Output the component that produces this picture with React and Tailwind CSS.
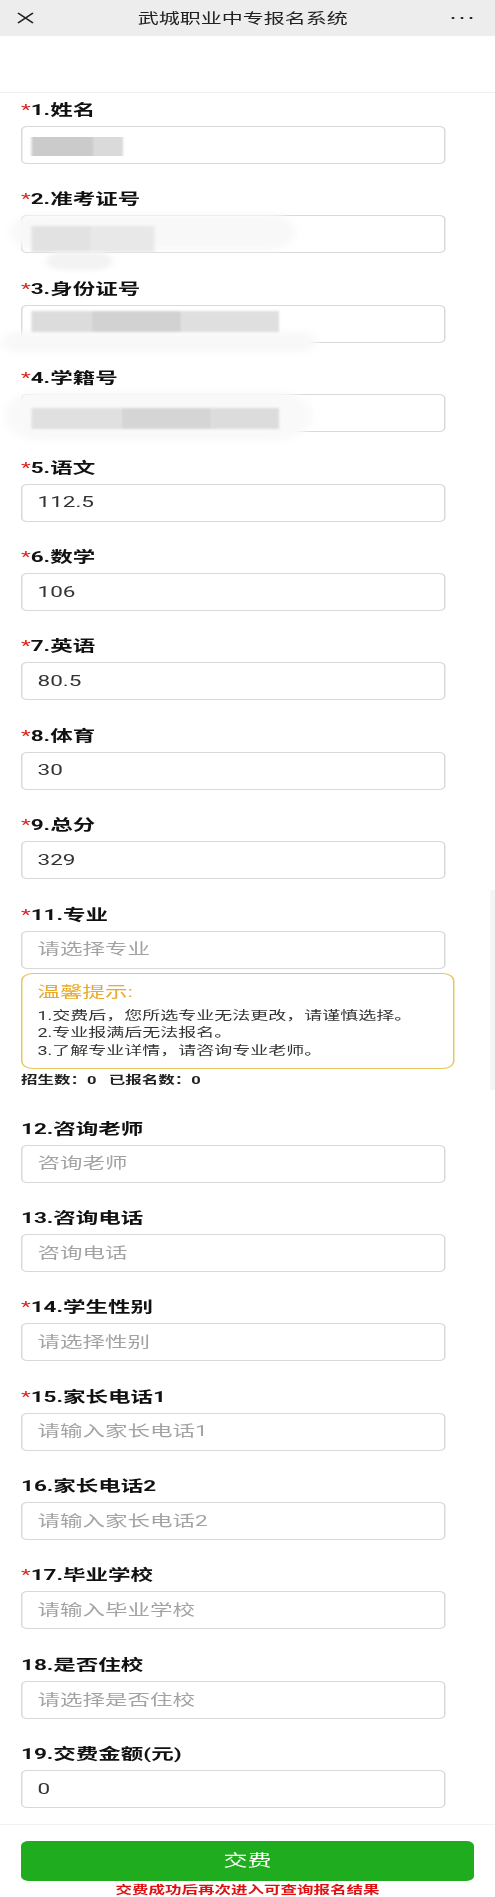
import React from 'react';

// screenshot is stretched horizontally ~1.5x, so the page is laid out at 330px and scaled on x
const fields = [
  { label: '1.姓名', req: true, redact: 1 },
  { label: '2.准考证号', req: true, redact: 2 },
  { label: '3.身份证号', req: true, redact: 3 },
  { label: '4.学籍号', req: true, redact: 4 },
  { label: '5.语文', req: true, value: '112.5' },
  { label: '6.数学', req: true, value: '106' },
  { label: '7.英语', req: true, value: '80.5' },
  { label: '8.体育', req: true, value: '30' },
  { label: '9.总分', req: true, value: '329' },
  { label: '11.专业', req: true, ph: '请选择专业', tip: true },
  { label: '12.咨询老师', ph: '咨询老师' },
  { label: '13.咨询电话', ph: '咨询电话' },
  { label: '14.学生性别', req: true, ph: '请选择性别' },
  { label: '15.家长电话1', req: true, ph: '请输入家长电话1' },
  { label: '16.家长电话2', ph: '请输入家长电话2' },
  { label: '17.毕业学校', req: true, ph: '请输入毕业学校' },
  { label: '18.是否住校', ph: '请选择是否住校' },
  { label: '19.交费金额(元)', value: '0' },
];

// blurred-out personal data
const Redaction = ({ kind }) => {
  if (kind === 1) {
    return (
      <div className="absolute left-[6px] top-[10px] flex h-[19px] blur-[0.6px]">
        <div className="w-[41px] bg-[#cbcbcb]" />
        <div className="w-[20px] bg-[#dadada]" />
      </div>
    );
  }
  if (kind === 2) {
    return (
      <>
        <div className="absolute left-[-8px] top-[-2px] w-[190px] h-[36px] rounded-full bg-[#f8f8f8] blur-[3px]" />
        <div className="absolute left-[6px] top-[10px] flex h-[26px] blur-[1px]">
          <div className="w-[40px] bg-[#e2e2e2]" />
          <div className="w-[42px] bg-[#e8e8e8]" />
        </div>
        <div className="absolute left-[16px] top-[36px] w-[44px] h-[18px] rounded-full bg-[#f3f3f3] blur-[2px]" />
      </>
    );
  }
  if (kind === 3) {
    return (
      <>
        <div className="absolute left-[-14px] top-[26px] w-[210px] h-[20px] rounded-full bg-[#f8f8f8] blur-[3px]" />
        <div className="absolute left-[6px] top-[5px] flex h-[21px] blur-[0.8px]">
          <div className="w-[40px] bg-[#dcdcdc]" />
          <div className="w-[60px] bg-[#d2d2d2]" />
          <div className="w-[65px] bg-[#dfdfdf]" />
        </div>
      </>
    );
  }
  return (
    <>
      <div className="absolute left-[-12px] top-[-4px] w-[205px] h-[50px] rounded-full bg-[#f9f9f9] blur-[3px]" />
      <div className="absolute left-[6px] top-[13px] flex h-[21px] blur-[0.8px]">
        <div className="w-[60px] bg-[#e0e0e0]" />
        <div className="w-[60px] bg-[#d5d5d5]" />
        <div className="w-[45px] bg-[#dcdcdc]" />
      </div>
    </>
  );
};

const Field = ({ f }) => (
  <div className={f.label.startsWith('12.') ? 'mt-[4.6px]' : ''}>
    <div className="h-6 mb-1 leading-6 text-[15px] font-bold text-[#111]">
      {f.req && <span className="text-[#e0201c] font-normal">*</span>}
      {f.label}
    </div>
    <div className="relative w-[283px] h-[38px] rounded-[4px] border border-[#d9d9d9] bg-white flex items-center pl-[10px] text-[15px]">
      {f.redact && <Redaction kind={f.redact} />}
      {f.value && <span className="text-[#333]">{f.value}</span>}
      {f.ph && <span className="text-[#a3a3a3]">{f.ph}</span>}
    </div>
    {f.tip && (
      <>
        <div className="mt-1 w-[289px] h-[96px] rounded-[8px] border border-[#e8c760] px-[10px] pt-[7px]">
          <div className="h-[22px] leading-[22px] text-[15px] text-[#e9a92a]">温馨提示:</div>
          <div className="mt-[5px] text-[12px] leading-[17.5px] text-[#333]">
            <p>1.交费后，您所选专业无法更改，请谨慎选择。</p>
            <p>2.专业报满后无法报名。</p>
            <p>3.了解专业详情，请咨询专业老师。</p>
          </div>
        </div>
        <div className="mt-1 h-4 leading-4 text-[11px] font-bold text-[#222]">
          招生数：0&nbsp;&nbsp;&nbsp;已报名数：0
        </div>
      </>
    )}
  </div>
);

export default function App() {
  return (
    <div className="relative w-[330px] origin-top-left scale-x-150 bg-white font-[family-name:Roboto,'Noto_Sans_CJK_SC',sans-serif]">
      <header className="h-9 bg-[#ededed] flex items-center justify-between pl-[11px] pr-[15px]">
        <svg width="12" height="12" viewBox="0 0 12 12">
          <path d="M1 1L11 11M11 1L1 11" stroke="#222" strokeWidth="1.2" fill="none" />
        </svg>
        <h1 className="text-[14px] text-[#222]">武城职业中专报名系统</h1>
        <div className="flex gap-[3.5px] items-center">
          <span className="w-[2.4px] h-[2.4px] rounded-full bg-[#111]" />
          <span className="w-[2.4px] h-[2.4px] rounded-full bg-[#111]" />
          <span className="w-[2.4px] h-[2.4px] rounded-full bg-[#111]" />
        </div>
      </header>
      <div className="h-[57px] border-b border-[#f0f0f0]" />

      <div className="px-[14px] pt-[5px] pb-4 flex flex-col gap-[23.4px] border-b border-[#f2f2f2]">
        {fields.map((f) => (
          <Field key={f.label} f={f} />
        ))}
      </div>

      <div className="px-[14px] pt-4">
        <button className="w-full h-10 rounded-[5px] bg-[#1fad1f] text-white text-[16px]">交费</button>
        <p className="mt-[2px] h-4 leading-4 text-center text-[11px] font-bold text-[#e01010]">交费成功后再次进入可查询报名结果</p>
      </div>

      <div className="absolute right-0 top-[890px] w-[3.5px] h-[200px] bg-[#f4f4f4]" />
    </div>
  );
}
